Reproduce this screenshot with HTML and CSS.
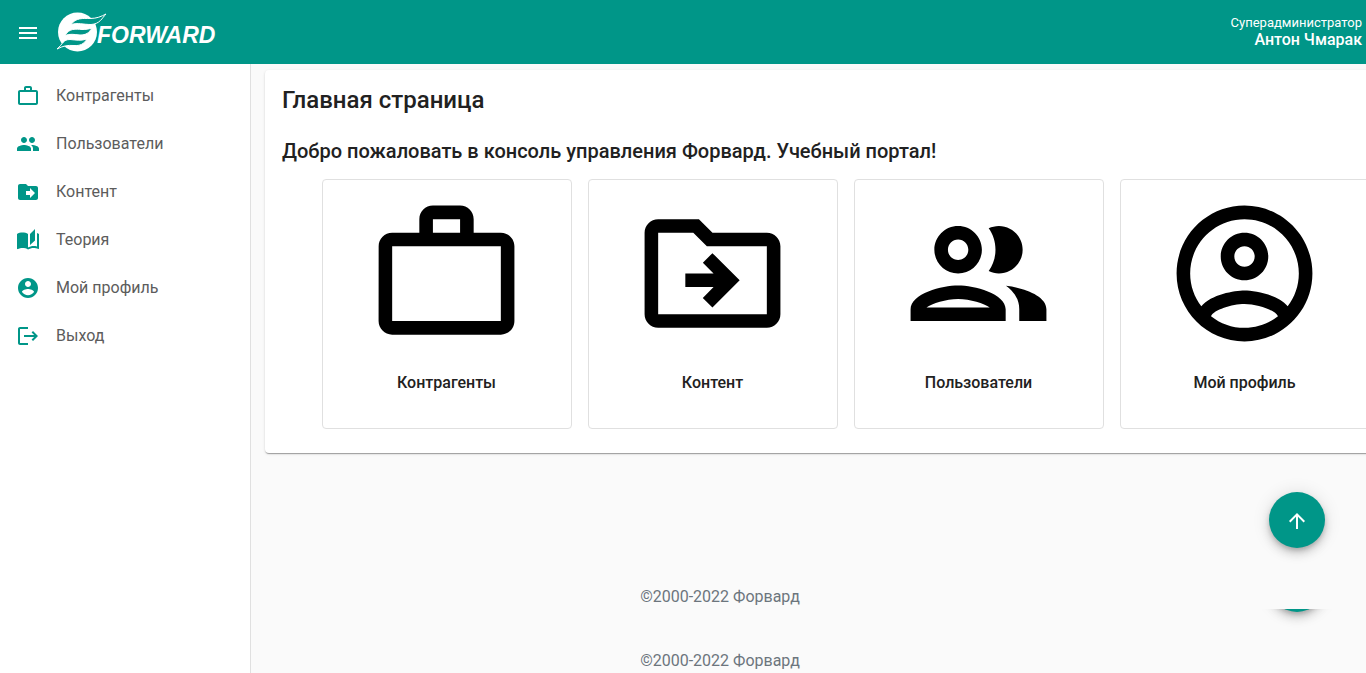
FILE: index.html
```html
<!DOCTYPE html>
<html lang="ru">
<head>
<meta charset="utf-8">
<meta name="viewport" content="width=device-width, initial-scale=1">
<title>Главная страница</title>
<link rel="stylesheet" href="styles.css">
</head>
<body>
<header class="topbar">
  <button class="menu-button" type="button" aria-label="Меню">
    <svg class="icon" viewBox="0 0 24 24"><path d="M3 18h18v-2H3v2zm0-5h18v-2H3v2zm0-7v2h18V6H3z"/></svg>
  </button>
  <a class="brand" href="#" aria-label="Forward">
    <svg class="brand-logo" viewBox="0 0 160 40">
      <circle class="logo-disc" cx="21.500" cy="20" r="19.500"/>
      <path class="logo-leaf" d="M15 12.500C20 5.500 27 6.500 34 6.500C41 6.500 45 4.500 50 2C46 6 44 12 35 12.500C27 12.500 22 10.500 15 12.500z"/>
      <path class="logo-leaf" d="M9 23.500C13 16 20 17 26 17.500C30 17.500 33 17 36 16C33 21 30 23 24 23C18 22.500 14 21.500 9 23.500z"/>
      <path class="logo-leaf" d="M1 37C7 32 7 27.500 14 27.500C20 28 25 29 31 27C28 32 24 34 18 33.500C11 33 7 34 1 37z"/>
      <text class="logo-text" x="41" y="31">FORWARD</text>
    </svg>
  </a>
  <div class="user">
    <span class="user-role">Суперадминистратор</span>
    <span class="user-name">Антон Чмарак</span>
  </div>
</header>
<div class="layout">
  <nav class="sidebar">
    <a class="nav-link" href="#"><svg class="icon" viewBox="0 0 24 24"><path d="M14 6V4h-4v2h4zM4 8v11h16V8H4zm16-2c1.110 0 2 .89 2 2v11c0 1.110-.89 2-2 2H4c-1.110 0-2-.89-2-2l.01-11c0-1.110.88-2 1.990-2h4V4c0-1.110.89-2 2-2h4c1.110 0 2 .89 2 2v2h4z"/></svg>Контрагенты</a>
    <a class="nav-link" href="#"><svg class="icon" viewBox="0 0 24 24"><path d="M16 11c1.660 0 2.990-1.340 2.990-3S17.660 5 16 5c-1.660 0-3 1.340-3 3s1.340 3 3 3zm-8 0c1.660 0 2.990-1.340 2.990-3S9.660 5 8 5C6.340 5 5 6.340 5 8s1.340 3 3 3zm0 2c-2.330 0-7 1.170-7 3.500V19h14v-2.500c0-2.330-4.670-3.500-7-3.500zm8 0c-.29 0-.62.02-.97.05 1.160.84 1.970 1.970 1.970 3.450V19h6v-2.500c0-2.330-4.670-3.500-7-3.500z"/></svg>Пользователи</a>
    <a class="nav-link" href="#"><svg class="icon" viewBox="0 0 24 24"><path d="M20 6h-8l-2-2H4c-1.100 0-2 .9-2 2v12c0 1.100.9 2 2 2h16c1.100 0 2-.9 2-2V8c0-1.100-.9-2-2-2zm-6 12v-3h-4v-4h4V8l5 5-5 5z"/></svg>Контент</a>
    <a class="nav-link" href="#"><svg class="icon" viewBox="0 0 24 24"><path d="M19 1l-5 5v11l5-4.500V1zM1 6v14.650c0 .25.25.5.5.5.1 0 .15-.05.25-.05C3.100 20.450 5.050 20 6.500 20c1.950 0 4.050.4 5.500 1.500V6c-1.450-1.100-3.550-1.500-5.500-1.500S2.450 4.900 1 6zm22 13.500V6c-.6-.45-1.250-.75-2-1v13.500c-1.100-.35-2.300-.5-3.500-.5-1.700 0-4.150.65-5.500 1.500v2c1.350-.85 3.800-1.500 5.500-1.500 1.650 0 3.350.3 4.750 1.050.1.050.15.050.25.050.25 0 .5-.25.5-.5v-1.100z"/></svg>Теория</a>
    <a class="nav-link" href="#"><svg class="icon" viewBox="0 0 24 24"><path d="M12 2C6.480 2 2 6.480 2 12s4.480 10 10 10 10-4.480 10-10S17.520 2 12 2zm0 3c1.660 0 3 1.340 3 3s-1.340 3-3 3-3-1.340-3-3 1.340-3 3-3zm0 14.200c-2.500 0-4.710-1.280-6-3.220.03-1.990 4-3.080 6-3.080 1.990 0 5.970 1.090 6 3.080-1.290 1.940-3.500 3.220-6 3.220z"/></svg>Мой профиль</a>
    <a class="nav-link" href="#"><svg class="icon" viewBox="0 0 24 24"><path d="M17 7l-1.410 1.410L18.170 11H8v2h10.170l-2.580 2.590L17 17l5-5zM4 5h8V3H4c-1.100 0-2 .9-2 2v14c0 1.100.9 2 2 2h8v-2H4V5z"/></svg>Выход</a>
  </nav>
  <div class="content">
    <main class="pane">
      <section class="panel">
        <h1 class="title">Главная страница</h1>
        <h2 class="subtitle">Добро пожаловать в консоль управления Форвард. Учебный портал!</h2>
        <div class="tiles">
          <a class="tile" href="#"><svg class="tile-icon" viewBox="0 0 24 24"><path d="M14 6V4h-4v2h4zM4 8v11h16V8H4zm16-2c1.110 0 2 .89 2 2v11c0 1.110-.89 2-2 2H4c-1.110 0-2-.89-2-2l.01-11c0-1.110.88-2 1.990-2h4V4c0-1.110.89-2 2-2h4c1.110 0 2 .89 2 2v2h4z"/></svg>Контрагенты</a>
          <a class="tile" href="#"><svg class="tile-icon" viewBox="0 0 24 24"><path d="M20 6h-8l-2-2H4c-1.100 0-2 .9-2 2v12c0 1.100.9 2 2 2h16c1.100 0 2-.9 2-2V8c0-1.100-.9-2-2-2zM4 18V6h5.170l2 2H20v10H4zm8.160-6H8v2h4.160l-1.590 1.590L11.990 17 16 13.010 11.990 9l-1.410 1.410L12.160 12z"/></svg>Контент</a>
          <a class="tile" href="#"><svg class="tile-icon" viewBox="0 0 24 24"><path d="M9 13.750c-2.340 0-7 1.170-7 3.500V19h14v-1.750c0-2.330-4.660-3.500-7-3.500zM4.340 17c.84-.58 2.870-1.250 4.660-1.250s3.820.67 4.660 1.250H4.340zM9 12c1.930 0 3.500-1.570 3.500-3.500S10.930 5 9 5 5.500 6.570 5.500 8.500 7.070 12 9 12zm0-5c.83 0 1.500.67 1.500 1.500S9.830 10 9 10s-1.500-.67-1.500-1.500S8.170 7 9 7zm7.040 6.810c1.160.84 1.960 1.960 1.960 3.440V19h4v-1.750c0-2.020-3.500-3.170-5.960-3.440zM15 12c1.930 0 3.500-1.570 3.500-3.500S16.930 5 15 5c-.54 0-1.040.13-1.500.35.63.89 1 1.980 1 3.150s-.37 2.260-1 3.150c.46.22.96.35 1.500.35z"/></svg>Пользователи</a>
          <a class="tile" href="#"><svg class="tile-icon" viewBox="0 0 24 24"><path d="M12 2C6.480 2 2 6.480 2 12s4.480 10 10 10 10-4.480 10-10S17.520 2 12 2zM7.070 18.280c.43-.9 3.050-1.780 4.930-1.780s4.510.88 4.930 1.780C15.570 19.360 13.860 20 12 20s-3.570-.64-4.930-1.720zm11.290-1.450c-1.430-1.740-4.900-2.330-6.360-2.330s-4.930.59-6.360 2.330C4.620 15.490 4 13.820 4 12c0-4.410 3.590-8 8-8s8 3.590 8 8c0 1.820-.62 3.490-1.640 4.830zM12 6c-1.940 0-3.500 1.560-3.500 3.500S10.060 13 12 13s3.500-1.560 3.500-3.500S13.940 6 12 6zm0 5c-.83 0-1.500-.67-1.500-1.500S11.170 8 12 8s1.500.67 1.500 1.500S12.830 11 12 11z"/></svg>Мой профиль</a>
        </div>
      </section>
      <footer class="footer">©2000-2022 Форвард</footer>
      <button class="fab" type="button" aria-label="Наверх"><svg class="icon" viewBox="0 0 24 24"><path d="M4 12l1.410 1.410L11 7.830V20h2V7.830l5.580 5.590L20 12l-8-8-8 8z"/></svg></button>
    </main>
    <div class="pane pane-tail">
      <footer class="footer">©2000-2022 Форвард</footer>
      <button class="fab fab-tail" type="button" aria-label="Наверх страницы"></button>
    </div>
  </div>
</div>
</body>
</html>
```
FILE: styles.css
```css
* {
  box-sizing: border-box;
}

body {
  display: flex;
  flex-direction: column;
  min-height: 100vh;
  margin: 0;
  background: #fafafa;
  color: #212121;
  font-family: Roboto, "Noto Sans", sans-serif;
  font-size: 16px;
  line-height: 24px;
}

a {
  color: inherit;
  text-decoration: none;
}

button {
  border: 0;
  padding: 0;
  cursor: pointer;
}

.icon {
  flex: none;
  width: 24px;
  height: 24px;
  fill: currentColor;
}

/* Top bar */
.topbar {
  display: flex;
  align-items: center;
  gap: 16px;
  height: 64px;
  padding: 0 4px 0 16px;
  background: #009688;
  color: #fff;
}

.menu-button {
  display: flex;
  padding-top: 2px;
  background: none;
  color: inherit;
}

.brand {
  display: flex;
}

.brand-logo {
  width: 160px;
  height: 40px;
  overflow: visible;
}

.logo-disc {
  fill: #fff;
}

.logo-leaf {
  fill: #009688;
  stroke: #fff;
  stroke-width: 1px;
}

.logo-text {
  fill: #fff;
  font: italic bold 23px "Liberation Sans", sans-serif;
}

.user {
  display: flex;
  flex-direction: column;
  align-items: flex-end;
  margin-left: auto;
}

.user-role {
  font-size: 13px;
  line-height: 16px;
}

.user-name {
  font-weight: 500;
  line-height: 18px;
}

/* Side navigation */
.layout {
  display: flex;
  flex: 1;
}

.sidebar {
  flex: none;
  width: 251px;
  padding-top: 8px;
  border-right: 1px solid #e0e0e0;
  background: #fff;
}

.nav-link {
  display: flex;
  align-items: center;
  gap: 16px;
  height: 48px;
  padding: 0 16px;
  color: #5c5c5c;
}

.nav-link .icon {
  color: #009688;
}

/* Main area: wide content runs past the right edge and is cut off */
.content {
  display: flex;
  flex: 1;
  flex-direction: column;
  min-width: 0;
}

.pane {
  position: relative;
  display: flex;
  flex: 1;
  flex-direction: column;
  justify-content: space-between;
  overflow: hidden;
}

.pane-tail {
  flex: none;
  justify-content: flex-end;
  height: 64px;
}

.panel {
  margin: 6px -61px 0 14px;
  padding: 14px 17px 24px;
  border-radius: 4px;
  background: #fff;
  box-shadow: 0 2px 1px -1px rgba(0, 0, 0, 0.2), 0 1px 1px rgba(0, 0, 0, 0.14), 0 1px 3px rgba(0, 0, 0, 0.12);
}

.title {
  margin: 0 0 19px;
  font-size: 24px;
  font-weight: 500;
  line-height: 32px;
}

.subtitle {
  margin: 0 0 12px;
  font-size: 20px;
  font-weight: 500;
  line-height: 32px;
}

.tiles {
  display: flex;
  justify-content: center;
  gap: 16px;
}

.tile {
  display: flex;
  flex: none;
  flex-direction: column;
  align-items: center;
  gap: 16px;
  width: 250px;
  height: 250px;
  padding: 12px 1px 0 0;
  border: 1px solid #e0e0e0;
  border-radius: 4px;
  font-weight: 500;
}

.tile-icon {
  width: 163px;
  height: 163px;
  fill: #000;
}

.footer {
  margin: 0 -74px 0 -251px;
  color: #6c757d;
  text-align: center;
}

.fab {
  position: absolute;
  right: 41px;
  bottom: 61px;
  display: flex;
  align-items: center;
  justify-content: center;
  width: 56px;
  height: 56px;
  padding-top: 2px;
  border-radius: 50%;
  background: #009688;
  color: #fff;
  box-shadow: 0 3px 5px -1px rgba(0, 0, 0, 0.2), 0 6px 10px rgba(0, 0, 0, 0.14), 0 1px 18px rgba(0, 0, 0, 0.12);
}

/* Only the lower rim shows below the pane edge */
.fab-tail {
  top: -53px;
  bottom: auto;
}
```
